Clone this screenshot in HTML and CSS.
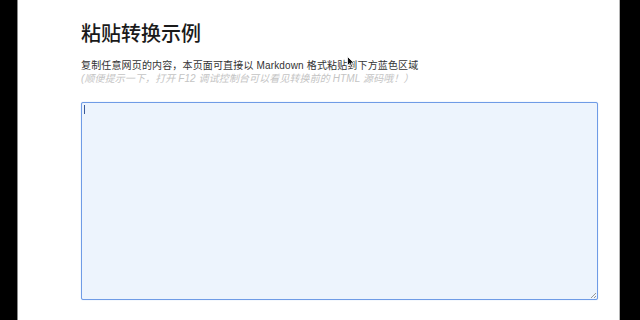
FILE: index.html
```html
<!DOCTYPE html>
<html lang="zh-CN">
<head>
<meta charset="utf-8">
<title>粘贴转换示例</title>
<link rel="stylesheet" href="styles.css">
</head>
<body>
<div class="frame">
  <div class="page">
    <h1 class="title">粘贴转换示例</h1>
    <p class="desc">复制任意网页的内容，本页面可直接以 Markdown 格式粘贴到下方蓝色区域</p>
    <p class="hint">(顺便提示一下，打开 F12 调试控制台可以看见转换前的 HTML 源码哦！）</p>
    <div class="area">
      <span class="caret"></span>
      <svg class="grip" width="7" height="7" viewBox="0 0 7 7"><path d="M6 1 L1 6 M6 4 L4 6" stroke="#999" stroke-width="1" fill="none"/></svg>
    </div>
    <svg class="cursor" width="8" height="12" viewBox="0 0 8 12"><path d="M0.5 0.5 L0.5 9.5 L2.6 7.6 L4.2 11.2 L5.6 10.6 L4.1 7.1 L7 7 Z" fill="#111" stroke="#fff" stroke-width="0.8"/></svg>
  </div>
</div>
</body>
</html>
```
FILE: styles.css
```css
html, body {
  margin: 0;
  padding: 0;
  background: #000;
}
.frame {
  width: 640px;
  height: 320px;
  display: flex;
  background: #000;
  overflow: hidden;
}
.page {
  position: relative;
  margin-left: 17px;
  width: 603px;
  height: 320px;
  box-sizing: border-box;
  background: #fff;
  border-left: 1px solid #8a8a8a;
  border-right: 1px solid #b5b5b5;
  padding: 19px 0 0 63px;
  font-family: "Liberation Sans", "Noto Sans CJK SC", sans-serif;
}
.title {
  margin: 0;
  font-size: 20px;
  line-height: 28px;
  font-weight: 500;
  color: #1a1a1a;
  font-family: "Noto Sans CJK SC", sans-serif;
}
.desc {
  margin: 12px 0 0 0;
  font-size: 10px;
  line-height: 13px;
  color: #333;
  letter-spacing: 0.15px;
}
.hint {
  margin: 0;
  font-size: 10px;
  line-height: 13px;
  color: #c4c4c4;
  font-style: italic;
  letter-spacing: 0.1px;
}
.area {
  position: relative;
  margin-top: 17px;
  width: 517px;
  height: 198px;
  box-sizing: border-box;
  border: 1px solid #6f9be6;
  border-radius: 2px;
  background: #edf4fd;
  box-shadow: 0 0 1px #9dbcf0;
}
.caret {
  position: absolute;
  left: 2px;
  top: 2px;
  width: 1px;
  height: 9px;
  background: #3a5a99;
}
.grip {
  position: absolute;
  right: 0;
  bottom: 0;
}
.cursor {
  position: absolute;
  left: 329px;
  top: 56px;
}
```
